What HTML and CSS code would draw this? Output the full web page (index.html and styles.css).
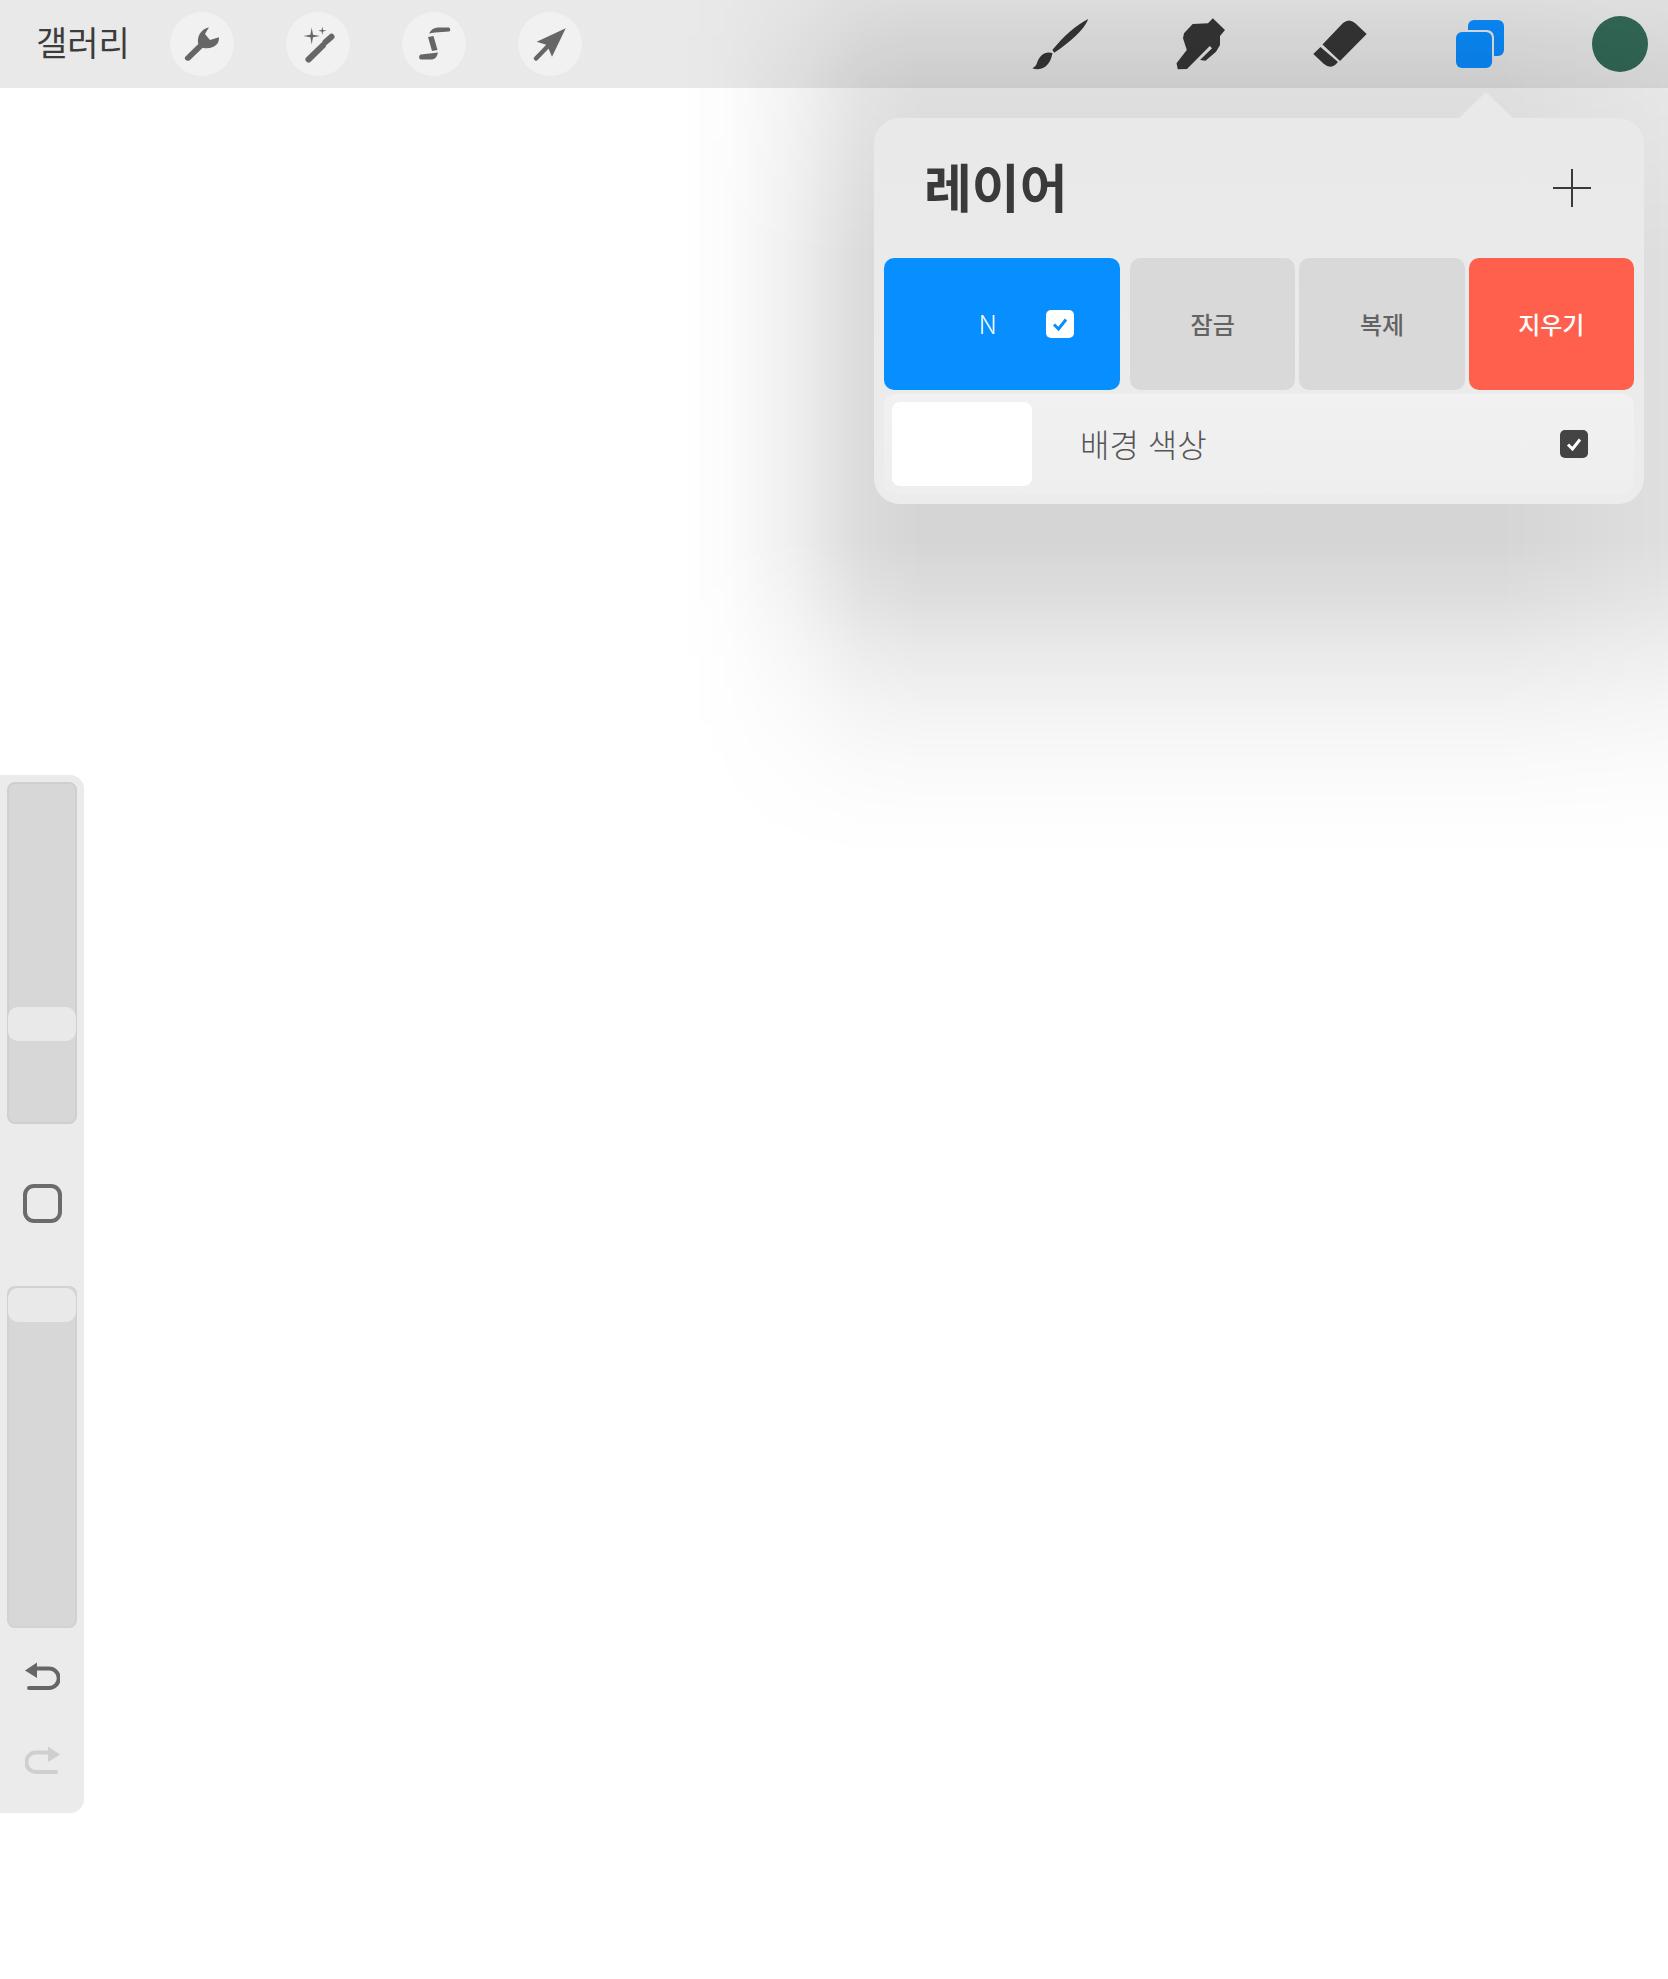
FILE: index.html
```html
<!DOCTYPE html>
<html lang="ko">
<head>
    <meta charset="UTF-8">
    <meta name="viewport" content="width=device-width, initial-scale=1.0">
    <title>레이어</title>
    <link rel="stylesheet" href="styles.css">
</head>
<body>
    <header class="topbar">
        <span class="gallery">갤러리</span>
        <div class="actions">
            <button class="round-btn">
                <svg viewBox="0 0 64 64"><path d="M39 15.300 35 22 40 28 49 25.300C49 29 48 31.500 46 33 43.500 35.800 38 37 32.700 35.700L20 48C18.500 49.300 16.500 49 15.500 47.800 14.500 46.800 14.600 45.300 15.500 44.500L28.300 32C26.500 25 31 17 39 15.300Z"/></svg>
            </button>
            <button class="round-btn">
                <svg viewBox="0 0 64 64"><path d="M25.700 15.500 27 22.700 34 24 27 25.300 25.700 32.500 24.400 25.300 17.400 24 24.400 22.700ZM36.300 14.500 37 18 40.500 18.700 37 19.400 36.300 23 35.600 19.400 32 18.700 35.600 18Z"/><path class="wand" d="M22.500 47.500 37 33.300M39.500 30 45.500 24.800"/></svg>
            </button>
            <button class="round-btn">
                <svg viewBox="0 0 64 64"><path d="M27 21.500C29 17.500 32 15.500 36 15.500H46.500C48.500 15.500 49 19 47 19.500L33 20.500C31 20.700 29 21.200 27 21.500ZM26 25 31.500 24 35.500 38 30 39ZM19 42.500 36 40.500C35 45 33 47.500 29 47.500H19C16.500 47.500 16.500 43 19 42.500Z"/></svg>
            </button>
            <button class="round-btn">
                <svg viewBox="0 0 64 64"><path d="M47.700 16.300 18.700 29.700 29 33 34 44.700Z"/><path class="shaft" d="M31 33 18 46.500"/></svg>
            </button>
        </div>
        <div class="tools">
            <svg class="tool" viewBox="0 0 56 56"><path d="M56.300 3C44 9 32 20 20.300 34L22.300 36.700C38 26 52 14 56.300 3ZM20.500 37C13 34.500 7 40 5 47 4 50 2.500 51 .3 52.300 8 55 18 52 20.500 37Z"/></svg>
            <svg class="tool" viewBox="0 0 56 56"><path d="M40.800 2.300 53 14 48 20V29L44 35.700 33.500 44.700 28 44 40 32.300 37.800 30 15 53 5.800 53.300 4.500 47.300 14.800 34 11 22.300 12 17.300 20.700 8 36 7.300Z"/></svg>
            <svg class="tool" viewBox="0 0 56 56"><path d="M10.500 28.500 31 7Q37 1.800 43 7L54.700 18 28 45ZM8.500 31 1.300 38 12 48Q18 53 23 49L26 46Z"/></svg>
            <svg class="tool layers" viewBox="0 0 56 56"><rect x="16" y="4" width="36" height="36" rx="6"/><rect class="edge" x="4" y="14" width="38" height="38" rx="7"/><rect x="4" y="16" width="36" height="36" rx="6"/></svg>
            <span class="avatar"></span>
        </div>
    </header>

    <main class="canvas">
        <aside class="sidebar">
            <div class="slider slider-size"><span class="thumb"></span></div>
            <span class="modify"></span>
            <div class="slider slider-opacity"><span class="thumb"></span></div>
            <svg class="history undo" viewBox="0 0 35 29"><path class="arrow" d="M11 6.500H24A9.500 9.500 0 0 1 24 26H4"/><path d="M0 8.500 12 .5V16Z"/></svg>
            <svg class="history redo" viewBox="0 0 35 29"><path class="arrow" d="M24 6.500H11A9.500 9.500 0 0 0 11 26H31"/><path d="M35 8.500 23 .5V16Z"/></svg>
        </aside>
    </main>

    <div class="popover-shade"></div>
    <section class="popover">
        <div class="popover-head">
            <h1>레이어</h1>
            <span class="plus"></span>
        </div>
        <div class="layer-row">
            <div class="cell cell-active">
                <span class="mode">N</span>
                <span class="check check-light">
                    <svg viewBox="0 0 28 28"><path d="M8 14.500 12.500 19 20 9.500"/></svg>
                </span>
            </div>
            <div class="cell cell-grey cell-first">잠금</div>
            <div class="cell cell-grey">복제</div>
            <div class="cell cell-red">지우기</div>
        </div>
        <div class="bg-row">
            <span class="swatch"></span>
            <span class="bg-name">배경 색상</span>
            <span class="check check-dark">
                <svg viewBox="0 0 28 28"><path d="M8 14.500 12.500 19 20 9.500"/></svg>
            </span>
        </div>
    </section>
</body>
</html>
```

FILE: styles.css
```css
html, body {
    margin: 0;
    height: 100%;
    overflow: hidden;
    background: white;
    font-family: "Noto Sans CJK KR", "Noto Sans", sans-serif;
}
svg {
    display: block;
}

/* top bar */
.topbar {
    display: flex;
    align-items: center;
    height: 88px;
    padding: 0 20px 0 36px;
    background: #e9e9e9;
}
.gallery {
    width: 134px;
    padding-bottom: 5px;
    font-size: 34px;
    color: #3c3c3c;
}
.actions {
    display: flex;
    gap: 52px;
}
.round-btn {
    width: 64px;
    height: 64px;
    padding: 0;
    border: none;
    border-radius: 50%;
    background: #f1f1f1;
}
.round-btn svg {
    width: 64px;
    height: 64px;
    fill: #666;
}
.round-btn .wand {
    fill: none;
    stroke: #666;
    stroke-width: 6;
    stroke-linecap: round;
}
.round-btn .shaft {
    fill: none;
    stroke: #666;
    stroke-width: 4.500;
    stroke-linecap: round;
}
.tools {
    display: flex;
    align-items: center;
    gap: 84px;
    margin-left: auto;
}
.tool {
    width: 56px;
    height: 56px;
    fill: #363636;
    overflow: visible;
}
.layers {
    fill: #0a8dff;
}
.layers .edge {
    fill: #e6e6e6;
}
.avatar {
    width: 56px;
    height: 56px;
    border-radius: 50%;
    background: #336a58;
}

/* left toolbar */
.canvas {
    padding-top: 687px;
}
.sidebar {
    display: flex;
    flex-direction: column;
    align-items: center;
    width: 84px;
    height: 1038px;
    padding: 7px 0;
    box-sizing: border-box;
    background: #ebebeb;
    border-radius: 0 14px 14px 0;
}
.slider {
    display: flex;
    flex-direction: column;
    width: 70px;
    height: 342px;
    box-sizing: border-box;
    background: #d7d7d7;
    border: 2px solid #cfcfcf;
    border-radius: 8px;
}
.slider-size {
    padding-top: 223px;
}
.slider-opacity {
    border-color: #d2d2d2;
}
.thumb {
    height: 34px;
    margin: 0 -1px;
    background: #e9e9e9;
    border-radius: 10px;
}
.modify {
    width: 39px;
    height: 39px;
    margin: 60px 0 63px;
    box-sizing: border-box;
    border: 4px solid #6b6b6b;
    border-radius: 11px;
}
.history {
    width: 35px;
    height: 29px;
}
.history .arrow {
    fill: none;
    stroke-width: 4;
    stroke-linecap: round;
}
.undo {
    margin-top: 34px;
    fill: #666;
}
.undo .arrow {
    stroke: #666;
}
.redo {
    margin-top: 55px;
    fill: #cfcfcf;
}
.redo .arrow {
    stroke: #cfcfcf;
}

/* layers popover */
.popover-shade {
    position: absolute;
    top: 0;
    left: 0;
    right: 0;
    height: 870px;
    pointer-events: none;
    background: linear-gradient(to right,
        rgba(0, 0, 0, 0) 680px,
        rgba(0, 0, 0, 0.015) 730px,
        rgba(0, 0, 0, 0.06) 790px,
        rgba(0, 0, 0, 0.14) 863px,
        rgba(0, 0, 0, 0.165) 920px,
        rgba(0, 0, 0, 0.165) 1500px,
        rgba(0, 0, 0, 0.125) 1668px);
    -webkit-mask-image: linear-gradient(to bottom,
        rgba(0, 0, 0, 0.33) 0,
        rgba(0, 0, 0, 0.76) 88px,
        rgba(0, 0, 0, 1) 260px,
        rgba(0, 0, 0, 1) 540px,
        rgba(0, 0, 0, 0.8) 596px,
        rgba(0, 0, 0, 0.52) 650px,
        rgba(0, 0, 0, 0.3) 705px,
        rgba(0, 0, 0, 0.15) 759px,
        rgba(0, 0, 0, 0.05) 813px,
        rgba(0, 0, 0, 0) 860px);
    mask-image: linear-gradient(to bottom,
        rgba(0, 0, 0, 0.33) 0,
        rgba(0, 0, 0, 0.76) 88px,
        rgba(0, 0, 0, 1) 260px,
        rgba(0, 0, 0, 1) 540px,
        rgba(0, 0, 0, 0.8) 596px,
        rgba(0, 0, 0, 0.52) 650px,
        rgba(0, 0, 0, 0.3) 705px,
        rgba(0, 0, 0, 0.15) 759px,
        rgba(0, 0, 0, 0.05) 813px,
        rgba(0, 0, 0, 0) 860px);
}
.popover {
    position: absolute;
    top: 118px;
    right: 24px;
    width: 770px;
    height: 386px;
    box-sizing: border-box;
    padding: 0 10px;
    background: linear-gradient(#e9e9e9, #ececec);
    border-radius: 26px;
}
.popover::before {
    content: "";
    position: absolute;
    top: -26px;
    left: 585px;
    border-left: 27px solid transparent;
    border-right: 27px solid transparent;
    border-bottom: 26px solid #e9e9e9;
}
.popover-head {
    display: flex;
    align-items: center;
    justify-content: space-between;
    height: 140px;
    padding: 0 43px 0 40px;
}
.popover-head h1 {
    margin: 0;
    padding-bottom: 6px;
    font-size: 52px;
    font-weight: 700;
    color: #3a3a3a;
}
.plus {
    position: relative;
    width: 38px;
    height: 38px;
}
.plus::before, .plus::after {
    content: "";
    position: absolute;
    background: #3a3a3a;
}
.plus::before {
    left: 0;
    right: 0;
    top: 18px;
    height: 2px;
}
.plus::after {
    top: 0;
    bottom: 0;
    left: 18px;
    width: 2px;
}
.layer-row {
    display: flex;
    gap: 4px;
    height: 132px;
}
.cell {
    display: flex;
    flex: 1;
    align-items: center;
    justify-content: center;
    padding-bottom: 2px;
    box-sizing: border-box;
    border-radius: 10px;
    font-size: 24px;
    font-weight: 500;
}
.cell-active {
    flex: none;
    justify-content: flex-end;
    gap: 49px;
    width: 236px;
    padding: 0 46px 0 0;
    background: #078eff;
}
.cell-first {
    margin-left: 6px;
}
.cell-grey {
    background: #d9d9d9;
    color: #636363;
}
.cell-red {
    background: #ff604d;
    color: white;
}
.mode {
    padding-bottom: 3px;
    font-size: 26px;
    font-weight: 300;
    color: white;
}
.check {
    display: block;
    width: 28px;
    height: 28px;
    border-radius: 5px;
}
.check svg {
    fill: none;
    stroke-width: 3;
}
.check-light {
    background: white;
}
.check-light svg {
    stroke: #078eff;
}
.check-dark {
    background: #444;
}
.check-dark svg {
    stroke: white;
}
.bg-row {
    display: flex;
    align-items: center;
    height: 100px;
    margin-top: 4px;
    padding: 0 46px 0 8px;
    background: linear-gradient(#f1f1f1, #eeeeee);
    border-radius: 12px;
}
.swatch {
    width: 140px;
    height: 84px;
    background: white;
    border-radius: 8px;
}
.bg-name {
    flex: 1;
    margin-left: 48px;
    padding-bottom: 3px;
    font-size: 32px;
    font-weight: 300;
    color: #555;
}
```
